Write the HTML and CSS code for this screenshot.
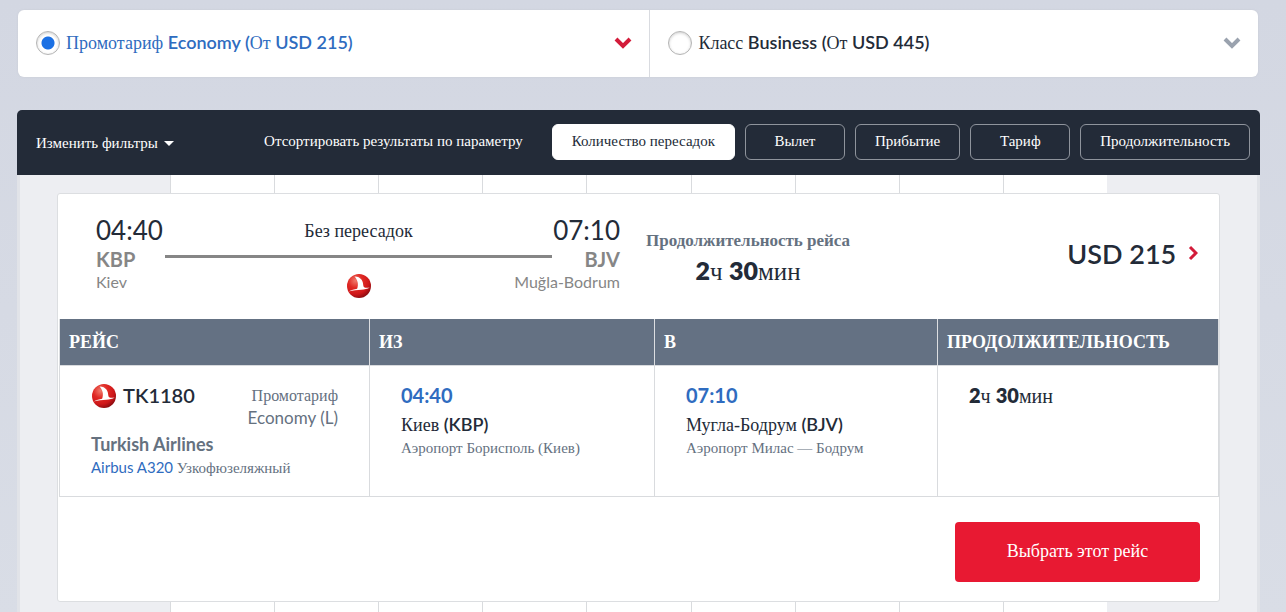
FILE: index.html
```html
<!DOCTYPE html>
<html lang="ru">
<head>
    <meta charset="UTF-8">
    <title>Выбор рейса</title>
    <link rel="stylesheet" href="styles.css">
</head>
<body>
<svg class="defs" aria-hidden="true">
    <defs>
        <radialGradient id="ball" cx="35%" cy="28%" r="75%">
            <stop offset="0" stop-color="#f07a6c"/>
            <stop offset="0.4" stop-color="#e02a25"/>
            <stop offset="0.75" stop-color="#cf1719"/>
            <stop offset="1" stop-color="#8d0c10"/>
        </radialGradient>
        <symbol id="airline" viewBox="0 0 24 24">
            <circle cx="12" cy="12" r="12" fill="url(#ball)"/>
            <path fill="#fff" d="M7.500 2.400c3.200 3.400 4.300 7.600 2.600 12.400-2.800.4-5.900 1.300-8.300 2.700 4.200-1.200 8.600-1.500 12.400-1.800 3.300-.3 6.500-.9 8.500-2.300-2.300.5-4.200.6-5.500-.2C15.700 11.900 16.700 8.700 14.600 5.700 12.900 3.500 10.500 2.300 7.500 2.400z"/>
        </symbol>
    </defs>
</svg>

<div class="cabins">
    <label class="cabin selected">
        <input type="radio" name="cabin" checked>
        <span class="cabin-name">Промотариф <b>Economy (</b>От <b>USD 215)</b></span>
        <svg class="arrow" width="18" height="12" viewBox="0 0 18 12"><path d="M2 2l7 7 7-7"/></svg>
    </label>
    <label class="cabin">
        <input type="radio" name="cabin">
        <span class="cabin-name">Класс <b>Business (</b>От <b>USD 445)</b></span>
        <svg class="arrow" width="18" height="12" viewBox="0 0 18 12"><path d="M2 2l7 7 7-7"/></svg>
    </label>
</div>

<div class="results">
    <div class="toolbar">
        <button type="button" class="filter">Изменить фильтры <i class="caret"></i></button>
        <span class="sort-title">Отсортировать результаты по параметру</span>
        <div class="sort">
            <button type="button" class="active">Количество пересадок</button>
            <button type="button">Вылет</button>
            <button type="button">Прибытие</button>
            <button type="button">Тариф</button>
            <button type="button">Продолжительность</button>
        </div>
    </div>

    <div class="list">
        <div class="days"><i></i><i></i><i></i><i></i><i></i><i></i><i></i><i></i><i></i></div>
        <div class="flight">
            <div class="summary">
                <div class="route">
                    <span class="time">04:40</span>
                    <span class="stops">Без пересадок</span>
                    <span class="time to">07:10</span>
                    <span class="code">KBP</span>
                    <span class="line"></span>
                    <span class="code to">BJV</span>
                    <span class="city">Kiev</span>
                    <svg class="logo" width="24" height="24"><use href="#airline"/></svg>
                    <span class="city to">Muğla-Bodrum</span>
                </div>
                <div class="total">
                    <div class="total-title">Продолжительность рейса</div>
                    <div class="total-value"><b>2</b>ч <b>30</b>мин</div>
                </div>
                <div class="price">
                    USD 215
                    <svg width="10" height="16" viewBox="0 0 10 16"><path d="M2 2l6 6-6 6"/></svg>
                </div>
            </div>

            <table class="details">
                <thead>
                <tr>
                    <th class="col-flight">РЕЙС</th>
                    <th class="col-from">ИЗ</th>
                    <th class="col-to">В</th>
                    <th>ПРОДОЛЖИТЕЛЬНОСТЬ</th>
                </tr>
                </thead>
                <tbody>
                <tr>
                    <td>
                        <div class="flight-head">
                            <svg width="24" height="24"><use href="#airline"/></svg>
                            <span class="number">TK1180</span>
                            <span class="fare">Промотариф<br><span class="latin">Economy (L)</span></span>
                        </div>
                        <div class="airline">Turkish Airlines</div>
                        <div class="plane"><a href="#">Airbus A320</a> Узкофюзеляжный</div>
                    </td>
                    <td>
                        <div class="point-time">04:40</div>
                        <div class="point">Киев <b>(KBP)</b></div>
                        <div class="airport">Аэропорт Борисполь (Киев)</div>
                    </td>
                    <td>
                        <div class="point-time">07:10</div>
                        <div class="point">Мугла-Бодрум <b>(BJV)</b></div>
                        <div class="airport">Аэропорт Милас — Бодрум</div>
                    </td>
                    <td>
                        <div class="duration"><b>2</b>ч <b>30</b>мин</div>
                    </td>
                </tr>
                </tbody>
            </table>

            <div class="actions">
                <button type="button" class="select">Выбрать этот рейс</button>
            </div>
        </div>
        <div class="days"><i></i><i></i><i></i><i></i><i></i><i></i><i></i><i></i><i></i></div>
    </div>
</div>
</body>
</html>
```
FILE: styles.css
```css
*{
    box-sizing: border-box;
}
body{
    margin: 0;
    padding: 10px 26px 0 17px;
    background: linear-gradient(#d3d7e2, #d9dde6) #d9dde6;
    font-family: "Liberation Serif", serif;
    font-size: 18px;
    color: #232b38;
}
b,.time,.code,.city,.price,.number,.latin,.airline,.plane a,.point-time{
    font-family: Lato, sans-serif;
}
b{
    font-weight: 600;
}
button{
    font-family: inherit;
    cursor: pointer;
}
.defs{
    position: absolute;
    width: 0;
    height: 0;
}

/* cabin classes */
.cabins{
    display: flex;
    margin: 0 2px 33px 1px;
    background: #fff;
    border-radius: 6px;
    box-shadow: 0 0 2px #c6c9d2;
}
.cabin{
    display: flex;
    flex: 1;
    align-items: center;
    height: 67px;
    padding: 0 17px 2px 18px;
    cursor: pointer;
}
.cabin.selected{
    flex: 0 0 51%;
    border-right: 1px solid #d9dbe0;
    color: #2f6cc0;
}
.cabin input{
    appearance: none;
    width: 24px;
    height: 24px;
    margin: 0 6px 0 0;
    border: 1px solid #b4b4b4;
    border-radius: 50%;
    background: #fff;
    box-shadow: inset 0 1px 3px #ccc;
}
.cabin input:checked{
    background: radial-gradient(circle, #1b70e4 6px, #fff 7px);
}
.cabin-name{
    flex: 1;
}
.arrow,.price svg{
    fill: none;
    stroke: #9aa2ae;
    stroke-width: 4;
}
.selected .arrow,.price svg{
    stroke: #d31c3a;
}

/* toolbar */
.toolbar{
    display: flex;
    align-items: center;
    height: 65px;
    padding: 0 10px 2px 19px;
    background: #232b38;
    border-radius: 5px 5px 0 0;
    color: #fff;
    font-size: 15px;
}
.filter{
    padding: 4px 0 0;
    border: 0;
    background: none;
    color: #fff;
    font-size: 15px;
}
.caret{
    display: inline-block;
    margin-left: 3px;
    border: 5px solid transparent;
    border-top-color: #fff;
    border-bottom: 0;
    vertical-align: 2px;
}
.sort-title{
    margin-left: auto;
}
.sort{
    display: flex;
    gap: 10px;
    margin-left: 29px;
}
.sort button{
    min-width: 100px;
    height: 36px;
    padding: 0 19px;
    border: 1px solid #8f949c;
    border-radius: 6px;
    background: none;
    color: #fff;
    font-size: 15px;
}
.sort .active{
    border-color: #fff;
    background: #fff;
    color: #232b38;
}

/* flights */
.list{
    border: solid #e1e3e8;
    border-width: 0 3px;
    background: #edeef2;
}
.days{
    display: flex;
    height: 18px;
    padding: 0 150px;
}
.days i{
    flex: 1;
    border-left: 1px solid #d9dbde;
    background: #fff;
}
.flight{
    margin: 0 37px;
    border: 1px solid #dcdee1;
    border-radius: 3px;
    background: #fff;
}
.summary{
    display: flex;
    height: 125px;
    padding: 20px 21px 0 38px;
}
.route{
    display: grid;
    grid-template-columns: 69px 1fr 68px;
    grid-template-rows: 32px 26px 28px;
    flex: 0 0 524px;
    color: #868686;
}
.to{
    text-align: right;
}
.time{
    color: #232b38;
    font-size: 26px;
    line-height: 32px;
}
.stops{
    color: #232b38;
    line-height: 34px;
    text-align: center;
}
.code{
    font-size: 20px;
    font-weight: 700;
    line-height: 26px;
}
.line{
    height: 3px;
    margin-top: 9px;
    background: #868686;
}
.city{
    grid-row: 3;
    grid-column: 1;
    font-size: 16px;
    line-height: 20px;
}
.city.to{
    grid-column: 2 / 4;
}
.logo{
    grid-row: 3;
    grid-column: 2;
    align-self: center;
    justify-self: center;
}
.total{
    margin-left: 26px;
    padding-top: 17px;
    text-align: center;
}
.total-title{
    color: #65717f;
    font-size: 17px;
    font-weight: bold;
    line-height: 20px;
}
.total-value{
    font-size: 25px;
    line-height: 38px;
}
.price{
    margin-left: auto;
    padding-top: 20px;
    font-size: 27px;
    font-weight: 600;
    line-height: 40px;
}
.price svg{
    margin-left: 5px;
    stroke-width: 3;
    vertical-align: 3px;
}
.details{
    width: calc(100% - 1px);
    margin-left: 1px;
    border-collapse: collapse;
    table-layout: fixed;
}
.details th{
    height: 46px;
    padding: 2px 9px 0;
    border: solid #dcdee1;
    border-width: 0 1px;
    background: #647183;
    color: #fff;
    font-size: 18px;
    text-align: left;
}
.col-flight{
    width: 310px;
}
.col-from{
    width: 285px;
}
.col-to{
    width: 283px;
}
.details td{
    height: 131px;
    padding: 14px 31px 0;
    border: 1px solid #d9dbde;
    vertical-align: top;
}
.flight-head{
    display: flex;
    align-items: flex-start;
    height: 52px;
}
.flight-head svg{
    margin: 4px 7px 0 1px;
}
.number{
    font-size: 20px;
    font-weight: 600;
    line-height: 30px;
}
.fare{
    margin-left: auto;
    color: #65717f;
    font-size: 16px;
    line-height: 22px;
    padding-top: 5px;
    text-align: right;
}
.latin{
    font-size: 17px;
}
.airline{
    color: #65717f;
    font-weight: 700;
    line-height: 24px;
}
.plane{
    color: #65717f;
    font-size: 15px;
    line-height: 23px;
}
.plane a{
    color: #2f6cc0;
    text-decoration: none;
}
.point-time{
    color: #2f6cc0;
    font-size: 20px;
    font-weight: 700;
    line-height: 30px;
}
.point{
    line-height: 28px;
}
.airport{
    color: #65717f;
    font-size: 15px;
    line-height: 18px;
}
.duration{
    font-size: 20px;
    line-height: 30px;
}
.duration b,.total-value b{
    font-weight: 800;
}
.actions{
    padding: 25px 19px 19px;
    text-align: right;
}
.select{
    width: 245px;
    height: 60px;
    border: 0;
    border-radius: 4px;
    background: #e81932;
    color: #fff;
    font-size: 18px;
    vertical-align: top;
}
```
